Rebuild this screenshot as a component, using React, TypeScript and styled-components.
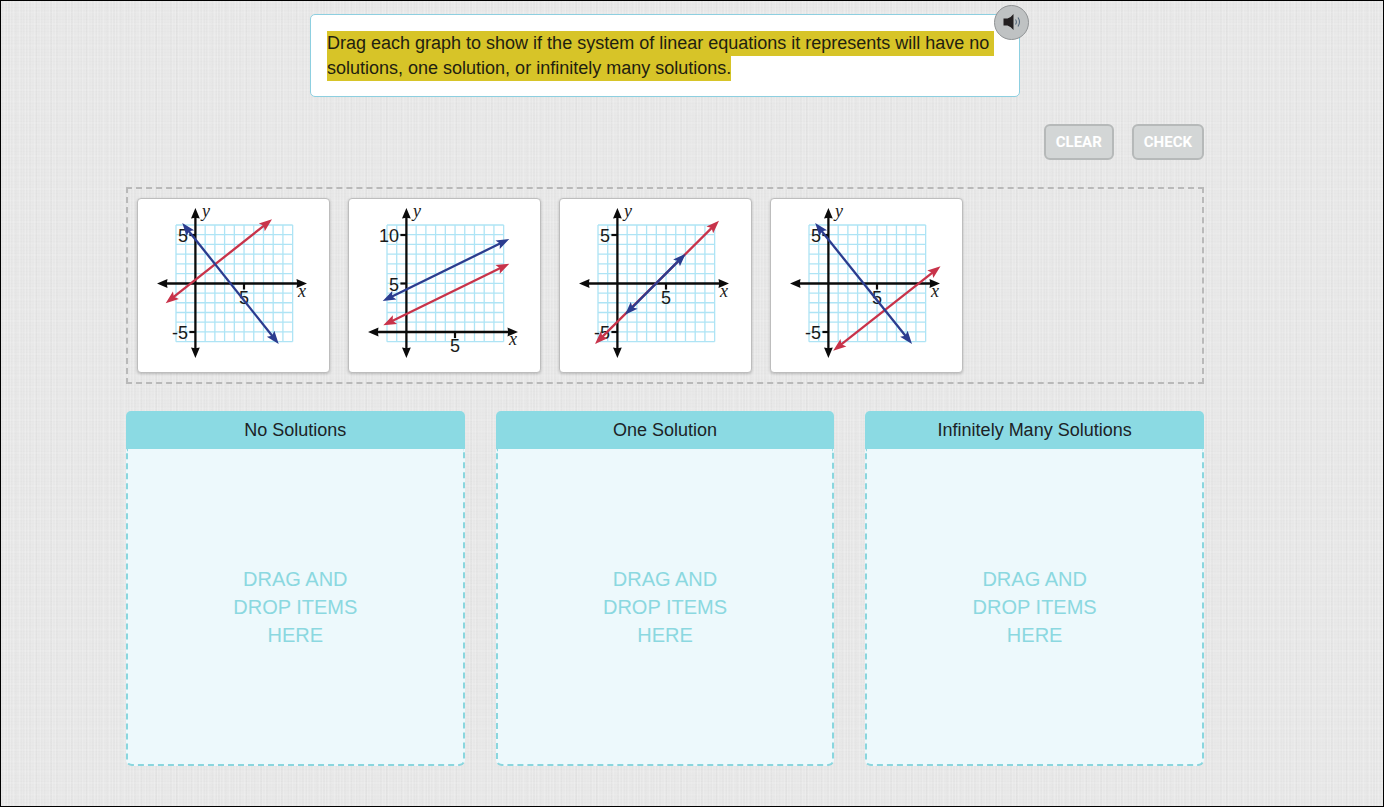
import React from "react";
import styled, { createGlobalStyle } from "styled-components";

const GlobalStyle = createGlobalStyle`
  *, *::before, *::after { box-sizing: border-box; }
  body {
    margin: 0;
    color: #1c2326;
    font-family: "Liberation Sans", Arial, sans-serif;
    font-size: 18px;
  }
`;

const Page = styled.div`
  min-height: 100vh;
  padding: 13px 54px 27px 0;
  border: 1px solid #000;
  background-color: #e8e8e8;
  background-image:
    repeating-linear-gradient(90deg, rgba(255, 255, 255, 0.16) 0 1px, transparent 1px 3px),
    repeating-linear-gradient(90deg, rgba(0, 0, 0, 0.012) 0 1px, transparent 1px 5px),
    repeating-linear-gradient(90deg, rgba(0, 0, 0, 0.01) 0 2px, transparent 2px 7px),
    repeating-linear-gradient(0deg, rgba(0, 0, 0, 0.008) 0 1px, transparent 1px 3px),
    repeating-linear-gradient(0deg, rgba(255, 255, 255, 0.1) 0 2px, transparent 2px 11px);
`;

const Activity = styled.main`
  display: flex;
  flex-direction: column;
  gap: 27px;
  width: 1078px;
  max-width: 90%;
  margin: 0 auto;
`;

const Prompt = styled.section`
  position: relative;
  align-self: center;
  width: 100%;
  max-width: 710px;
  padding: 16px 16px 15px;
  border: 1px solid #8dcfe0;
  border-radius: 5px;
  background: #fff;
`;

const PromptText = styled.p`
  margin: 0;
  line-height: 25px;
  white-space: pre-wrap;
`;

const Highlight = styled.mark`
  padding: 2px 0 3px;
  background: #d7c428;
  color: #1f2110;
`;

const SpeakerButton = styled.button`
  position: absolute;
  top: -10px;
  right: -10px;
  display: grid;
  place-items: center;
  width: 35px;
  height: 35px;
  padding: 0 0 2px;
  border: 1px solid #909395;
  border-radius: 50%;
  background: #bfc2c3;
`;

const Actions = styled.div`
  display: flex;
  justify-content: flex-end;
  gap: 18px;
`;

const ActionButton = styled.button`
  height: 36px;
  padding: 0 10px;
  border: 2px solid #b6b9b9;
  border-radius: 6px;
  background: #d3d6d6;
  color: #fff;
  font: 700 15px/20px Roboto, sans-serif;
`;

const Tray = styled.ul`
  display: flex;
  flex-wrap: wrap;
  gap: 18px;
  margin: 0;
  padding: 9px;
  border: 2px dashed #b9b9b9;
  list-style: none;
`;

const GraphCard = styled.li`
  width: 193px;
  height: 175px;
  border: 1px solid #bdbdbd;
  border-radius: 4px;
  background: #fff;
  box-shadow: 0 1px 3px rgba(0, 0, 0, 0.2);
  cursor: grab;

  svg { display: block; }
`;

const Bins = styled.div`
  display: grid;
  grid-template-columns: repeat(3, 1fr);
  gap: 31px;
`;

const Bin = styled.section`
  display: flex;
  flex-direction: column;
`;

const BinTitle = styled.h2`
  margin: 0;
  border-radius: 5px 5px 0 0;
  background: #8bdae3;
  font-size: 18px;
  font-weight: 400;
  line-height: 38px;
  text-align: center;
`;

const DropArea = styled.div`
  display: grid;
  place-items: center;
  min-height: 317px;
  border: 2px dashed #8ad6de;
  border-top: 0;
  border-radius: 0 0 6px 6px;
  background: #edf9fc;
`;

const DropHint = styled.p`
  max-width: 140px;
  margin: 0;
  color: #8bd8e0;
  font-size: 20px;
  line-height: 28px;
  text-align: center;
`;

type Point = [number, number];
type Segment = { color: string; from: Point; to: Point };
type GraphSpec = {
  label: string;
  xAxisY: number;
  yTicks: { text: string; y: number }[];
  lines: Segment[];
};

const RED = "#c8334a";
const BLUE = "#2b3c8f";
const INK = "#0b0b0b";
const CELL = 9.72;
const AXIS_X = 58.4;
const GRID_X = 39;
const GRID_Y = 27;

const BARBED_HEAD = "M0 0L-13 -4.8L-10.5 0L-13 4.8Z";
const SOLID_HEAD = "M0 0L-10.5 -4.4L-9.8 0L-10.5 4.4Z";

const STANDARD_TICKS = [
  { text: "5", y: 37 },
  { text: "-5", y: 134 },
];

const graphs: GraphSpec[] = [
  {
    label: "Two lines crossing above the x axis",
    xAxisY: 85.5,
    yTicks: STANDARD_TICKS,
    lines: [
      { color: RED, from: [28.7, 105.3], to: [135, 21.3] },
      { color: BLUE, from: [45.3, 25], to: [141.7, 146] },
    ],
  },
  {
    label: "Two parallel lines",
    xAxisY: 134,
    yTicks: [
      { text: "10", y: 37 },
      { text: "5", y: 85.5 },
    ],
    lines: [
      { color: BLUE, from: [34.7, 103], to: [161.3, 41] },
      { color: RED, from: [35.3, 127.3], to: [161.3, 65.7] },
    ],
  },
  {
    label: "Two lines that coincide",
    xAxisY: 85.5,
    yTicks: STANDARD_TICKS,
    lines: [
      { color: RED, from: [36, 146], to: [160, 22.7] },
      { color: BLUE, from: [66, 116.7], to: [126.7, 55.7] },
    ],
  },
  {
    label: "Two lines crossing below the x axis",
    xAxisY: 85.5,
    yTicks: STANDARD_TICKS,
    lines: [
      { color: RED, from: [63.2, 152.7], to: [170.5, 68.3] },
      { color: BLUE, from: [45.2, 25], to: [142, 146] },
    ],
  },
];

function Arrow({ color, from, to, head = BARBED_HEAD }: Segment & { head?: string }) {
  const angle = Math.atan2(to[1] - from[1], to[0] - from[0]);
  const degrees = (angle * 180) / Math.PI;
  const dx = Math.cos(angle) * 7;
  const dy = Math.sin(angle) * 7;
  return (
    <g fill={color}>
      <line
        x1={from[0] + dx}
        y1={from[1] + dy}
        x2={to[0] - dx}
        y2={to[1] - dy}
        stroke={color}
        strokeWidth="2.3"
      />
      <path d={head} transform={`translate(${to[0]} ${to[1]}) rotate(${degrees})`} />
      <path d={head} transform={`translate(${from[0]} ${from[1]}) rotate(${degrees + 180})`} />
    </g>
  );
}

function Graph({ label, xAxisY, yTicks, lines }: GraphSpec) {
  const steps = Array.from({ length: 13 }, (_, i) => i * CELL);
  const span = 12 * CELL;
  const tickX = AXIS_X + 5 * CELL;
  return (
    <svg width="191" height="173" viewBox="1 1 191 173" role="img" aria-label={label}>
      <g stroke="#aee4f5" strokeWidth="1.3">
        {steps.map((s) => (
          <React.Fragment key={s}>
            <line x1={GRID_X + s} y1={GRID_Y} x2={GRID_X + s} y2={GRID_Y + span} />
            <line x1={GRID_X} y1={GRID_Y + s} x2={GRID_X + span} y2={GRID_Y + s} />
          </React.Fragment>
        ))}
      </g>
      <Arrow color={INK} head={SOLID_HEAD} from={[20, xAxisY]} to={[170, xAxisY]} />
      <Arrow color={INK} head={SOLID_HEAD} from={[AXIS_X, 10]} to={[AXIS_X, 160]} />
      <g stroke={INK} strokeWidth="2.2">
        <line x1={tickX} y1={xAxisY} x2={tickX} y2={xAxisY + 6} />
        {yTicks.map((t) => (
          <line key={t.text} x1={AXIS_X - 6} y1={t.y} x2={AXIS_X} y2={t.y} />
        ))}
      </g>
      <g fill="#1a1a1a" fontFamily="Liberation Sans, Arial, sans-serif" fontSize="18">
        <text x={tickX} y={xAxisY + 20} textAnchor="middle">5</text>
        {yTicks.map((t) => (
          <text key={t.text} x="51" y={t.y + 7} textAnchor="end">{t.text}</text>
        ))}
      </g>
      <g fill="#1a1a1a" fontFamily="Liberation Serif, Times New Roman, serif" fontSize="18" fontStyle="italic">
        <text x="65" y="19">y</text>
        <text x="161" y={xAxisY + 13}>x</text>
      </g>
      {lines.map((line) => (
        <Arrow key={line.color} {...line} />
      ))}
    </svg>
  );
}

function SpeakerIcon() {
  return (
    <svg width="20" height="18" viewBox="0 0 20 18" fill="none" aria-hidden="true">
      <path d="M1.500 5.500H5.500Q9 4.500 11.500 1V17Q9 13.500 5.500 12.500H1.500Z" fill="#231f20" />
      <path d="M13.500 6.500Q15.300 9 13.500 11.500M16 4.500Q19 9 16 13.500" stroke="#56697c" strokeWidth="1.1" />
    </svg>
  );
}

const instructions =
  "Drag each graph to show if the system of linear equations it represents will have no solutions, one solution, or infinitely many solutions.";

const bins = ["No Solutions", "One Solution", "Infinitely Many Solutions"];

export default function App() {
  return (
    <>
      <GlobalStyle />
      <Page>
        <Activity>
          <Prompt>
            <PromptText>
              <Highlight>{instructions}</Highlight>
            </PromptText>
            <SpeakerButton type="button" aria-label="Read the instructions aloud">
              <SpeakerIcon />
            </SpeakerButton>
          </Prompt>
          <Actions>
            <ActionButton type="button">CLEAR</ActionButton>
            <ActionButton type="button">CHECK</ActionButton>
          </Actions>
          <Tray>
            {graphs.map((graph) => (
              <GraphCard key={graph.label} draggable>
                <Graph {...graph} />
              </GraphCard>
            ))}
          </Tray>
          <Bins>
            {bins.map((title) => (
              <Bin key={title}>
                <BinTitle>{title}</BinTitle>
                <DropArea>
                  <DropHint>DRAG AND DROP ITEMS HERE</DropHint>
                </DropArea>
              </Bin>
            ))}
          </Bins>
        </Activity>
      </Page>
    </>
  );
}
